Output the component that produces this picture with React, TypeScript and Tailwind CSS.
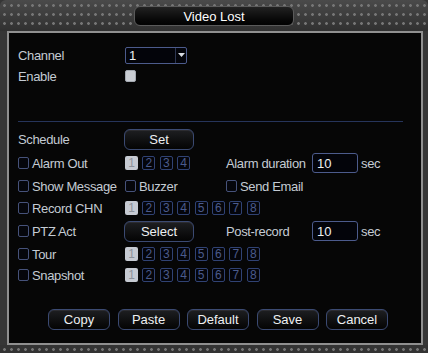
import React from "react";

const txt = "text-[13px] leading-none tracking-[-0.35px] text-[#c4cbd3]";
const dots =
  "bg-[radial-gradient(circle,#767676_1px,transparent_1.7px)] bg-[length:7px_9px]";

function Check({ on }: { on?: boolean }) {
  return (
    <span
      className={
        on
          ? "block w-[11px] h-[12px] rounded-[2px] bg-[#c9cdd3] border border-[#a3a8b0]"
          : "block w-[11px] h-[12px] rounded-[2px] border border-[#46527a] bg-[#05060b]"
      }
    />
  );
}

function CheckLabel({ text }: { text: string }) {
  return (
    <span className="flex items-center gap-[3px]">
      <Check />
      <span className={txt}>{text}</span>
    </span>
  );
}

function Boxes({ n }: { n: number }) {
  return (
    <div className="flex gap-[4.4px]">
      {Array.from({ length: n }).map((_, i) => (
        <span
          key={i}
          className={
            i === 0
              ? "flex items-center justify-center w-[13px] h-[14px] rounded-[2px] bg-[#c6cad2] text-[12px] leading-none text-[#8d929b]"
              : "flex items-center justify-center w-[13px] h-[14px] rounded-[2px] border border-[#304273] bg-[#04050b] text-[12px] leading-none text-[#4b5b8c]"
          }
        >
          {i + 1}
        </span>
      ))}
    </div>
  );
}

function Btn({ label, w = "w-[62px]" }: { label: string; w?: string }) {
  return (
    <div
      className={`${w} h-[21px] flex items-center justify-center rounded-[6px] border border-[#3b4a72] bg-gradient-to-b from-[#1e1f22] to-[#050505] text-[13px] leading-none text-[#eef0f2] shadow-[inset_0_1px_0_#2c2c30]`}
    >
      {label}
    </div>
  );
}

function NumInput({ value }: { value: string }) {
  return (
    <div className="flex items-center gap-[3px]">
      <div className="w-[46px] h-[20px] flex items-center pl-[4px] rounded-[3px] border border-[#4c5b8c] bg-[#03040a] text-[13px] leading-none text-[#eef0f2]">
        {value}
      </div>
      <span className={txt}>sec</span>
    </div>
  );
}

export default function App() {
  return (
    <div className="w-[428px] h-[353px] flex flex-col bg-[#363636] font-['Liberation_Sans',Arial,sans-serif] overflow-hidden">
      {/* top frame with title */}
      <div className="relative h-[31px] flex justify-center pt-[6px] bg-gradient-to-b from-[#4a4a4a] to-[#303030] rounded-t-[6px]">
        <div className={`absolute inset-0 ${dots} bg-[position:1px_1px]`} />
        <div className="relative w-[160px] h-[20px] flex items-center justify-center rounded-[6px] border border-[#5a5a5a] bg-gradient-to-b from-[#222] to-[#020202] text-[13px] leading-none text-white">
          Video Lost
        </div>
      </div>

      {/* panel */}
      <div className="flex-1 ml-[7px] mr-[5px] border-2 border-[#8f8f8f] bg-[#060606] flex flex-col pl-[9px]">
        <div className="flex items-center h-[20px] mt-[12px]">
          <span className={`${txt} w-[107px]`}>Channel</span>
          <div className="w-[62px] h-[17px] flex items-stretch rounded-[2px] border border-[#4c5b8c] bg-[#03040a]">
            <span className="flex-1 flex items-center pl-[3px] text-[13px] leading-none text-[#eef0f2]">1</span>
            <span className="w-[11px] flex items-center justify-center border-l border-[#2c3550]">
              <svg width="7" height="4" viewBox="0 0 7 4">
                <path d="M0 0h7L3.5 4z" fill="#d8dce2" />
              </svg>
            </span>
          </div>
        </div>
        <div className="flex items-center h-[20px] mt-px">
          <span className={`${txt} w-[107px]`}>Enable</span>
          <Check on />
        </div>

        <div className="w-[385px] h-px bg-[#26345a] mt-[35px]" />

        <div className="flex items-center h-[20px] mt-[7px]">
          <span className={`${txt} w-[106px]`}>Schedule</span>
          <Btn label="Set" w="w-[70px]" />
        </div>

        <div className="flex items-center h-[20px] mt-[4px]">
          <span className="w-[107px]">
            <CheckLabel text="Alarm Out" />
          </span>
          <span className="w-[101px]">
            <Boxes n={4} />
          </span>
          <span className={`${txt} w-[86px]`}>Alarm duration</span>
          <NumInput value="10" />
        </div>

        <div className="flex items-center h-[20px] mt-[3px]">
          <span className="w-[107px]">
            <CheckLabel text="Show Message" />
          </span>
          <span className="w-[101px]">
            <CheckLabel text="Buzzer" />
          </span>
          <CheckLabel text="Send Email" />
        </div>

        <div className="flex items-center h-[20px] mt-[2px]">
          <span className="w-[107px]">
            <CheckLabel text="Record CHN" />
          </span>
          <Boxes n={8} />
        </div>

        <div className="flex items-center h-[20px] mt-[3px]">
          <span className="w-[106px]">
            <CheckLabel text="PTZ Act" />
          </span>
          <span className="w-[102px]">
            <Btn label="Select" w="w-[70px]" />
          </span>
          <span className={`${txt} w-[86px]`}>Post-record</span>
          <NumInput value="10" />
        </div>

        <div className="flex items-center h-[20px] mt-[3px]">
          <span className="w-[107px]">
            <CheckLabel text="Tour" />
          </span>
          <Boxes n={8} />
        </div>

        <div className="flex items-center h-[20px] mt-px">
          <span className="w-[107px]">
            <CheckLabel text="Snapshot" />
          </span>
          <Boxes n={8} />
        </div>

        <div className="flex gap-[7.5px] ml-[30px] mt-[24px]">
          <Btn label="Copy" />
          <Btn label="Paste" />
          <Btn label="Default" />
          <Btn label="Save" />
          <Btn label="Cancel" />
        </div>
      </div>

      {/* bottom frame */}
      <div className={`h-[8px] bg-[#333] ${dots} bg-[position:1px_0px]`} />
    </div>
  );
}
